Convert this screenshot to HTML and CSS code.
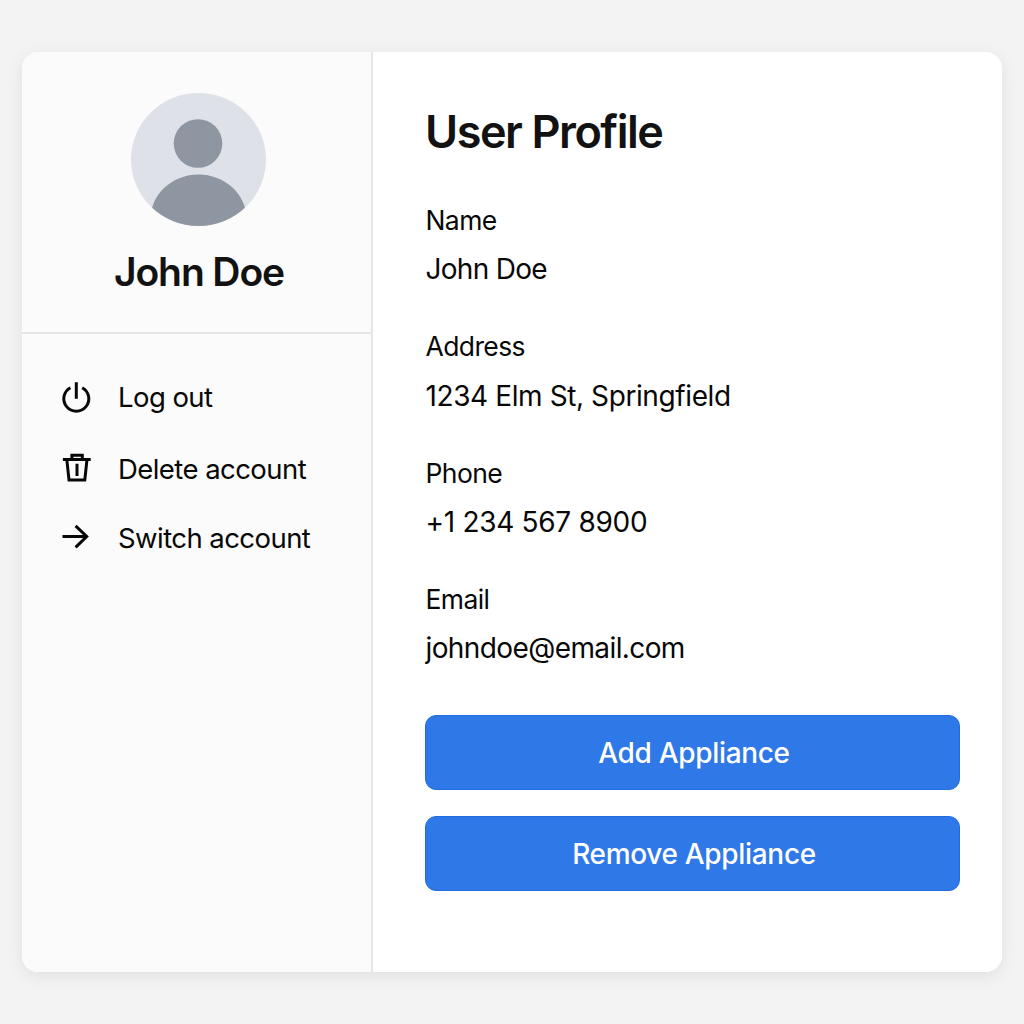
FILE: index.html
```html
<!DOCTYPE html>
<html lang="en">
<head>
<meta charset="utf-8">
<title>User Profile</title>
<link rel="stylesheet" href="styles.css">
</head>
<body>
<div class="card">
  <aside class="sidebar">
    <div class="identity">
      <svg class="avatar" viewBox="0 0 135 133" preserveAspectRatio="none">
        <defs><clipPath id="disc"><ellipse cx="67.5" cy="66.5" rx="67.5" ry="66.5"/></clipPath></defs>
        <ellipse cx="67.5" cy="66.5" rx="67.5" ry="66.5" fill="#dee1e7"/>
        <g clip-path="url(#disc)" fill="#8e96a1"><circle cx="67" cy="50.5" r="24.3"/><ellipse cx="67.5" cy="126" rx="48" ry="44.5"/></g>
      </svg>
      <h2 class="person">John Doe</h2>
    </div>
    <nav class="menu">
      <a class="item"><svg class="icon" viewBox="0 0 32 32"><path d="M10.4 6.7A12.5 12.5 0 1 0 22.200 6.700M16.300 1.200V17.800"/></svg><span>Log out</span></a>
      <a class="item item-delete"><svg class="icon" viewBox="0 0 32 32"><path d="M2.900 7.400H30.700M11.900 7.400V3.300H22.300V7.400M6.800 7.400L9 27.900H24.800L27 7.400M17 11.800V24"/></svg><span>Delete account</span></a>
      <a class="item"><svg class="icon" viewBox="0 0 32 32"><path d="M2.500 14.500H26.500M15.600 3.900L26.700 14.500L15.600 25.300"/></svg><span>Switch account</span></a>
    </nav>
  </aside>
  <main class="content">
    <h1 class="title">User Profile</h1>
    <dl class="fields">
      <div class="field"><dt>Name</dt><dd class="name">John Doe</dd></div>
      <div class="field"><dt>Address</dt><dd class="address">1234 Elm St, Springfield</dd></div>
      <div class="field"><dt>Phone</dt><dd class="phone">+1 234 567 8900</dd></div>
      <div class="field"><dt>Email</dt><dd class="email">johndoe@email.com</dd></div>
    </dl>
    <div class="actions">
      <button class="button">Add Appliance</button>
      <button class="button">Remove Appliance</button>
    </div>
  </main>
</div>
</body>
</html>
```
FILE: styles.css
```css
* { box-sizing: border-box; margin: 0; padding: 0; }
body { height: 1024px; padding: 52px 22px; background: #f3f3f3; color: #080808; font-family: Inter, "Liberation Sans", sans-serif; }
.card { display: flex; width: 980px; height: 920px; border-radius: 16px; background: #fff; overflow: hidden; box-shadow: 0 4px 16px rgba(0,0,0,.08); }
.sidebar { width: 351px; background: #fbfbfb; border-right: 2px solid #e6e6e6; }
.identity { height: 282px; padding-top: 41px; border-bottom: 2px solid #e6e6e6; text-align: center; }
.avatar { display: block; width: 135px; height: 133px; margin: 0 auto 22px 109px; }
.person { padding-left: 5px; color: #121212; font-size: 39px; line-height: 48px; font-weight: 600; letter-spacing: -1.1px; }
.menu { padding: 28px 0 0 38px; }
.item { display: flex; align-items: center; height: 70.5px; gap: 26px; font-size: 27.5px; letter-spacing: -.56px; }
.item-delete span { padding-top: 2px; }
.icon { width: 32px; height: 32px; fill: none; stroke: #080808; stroke-width: 3; }
.content { flex: 1; padding: 52px 42px 0 52px; }
.title { color: #121212; font-size: 45px; line-height: 56px; font-weight: 600; letter-spacing: -1.45px; }
.fields { padding: 36px 0 0 .5px; }
.field { height: 126.4px; line-height: 49px; }
.field dt { font-size: 26.5px; letter-spacing: -.6px; }
.field dd { font-size: 28px; }
.name { letter-spacing: -.7px; }
.field .address { line-height: 51px; letter-spacing: -.4px; }
.phone { letter-spacing: -.3px; }
.email { letter-spacing: -.6px; }
.actions { display: grid; gap: 26px; padding-top: 13px; }
.button { width: 535px; height: 75px; padding: 2px 0 0 3px; border: 1px solid #226ce2; border-radius: 11px; background: #2f78e7; color: #fff; font: 500 28px/71px Inter, "Liberation Sans", sans-serif; letter-spacing: -.32px; }
```
